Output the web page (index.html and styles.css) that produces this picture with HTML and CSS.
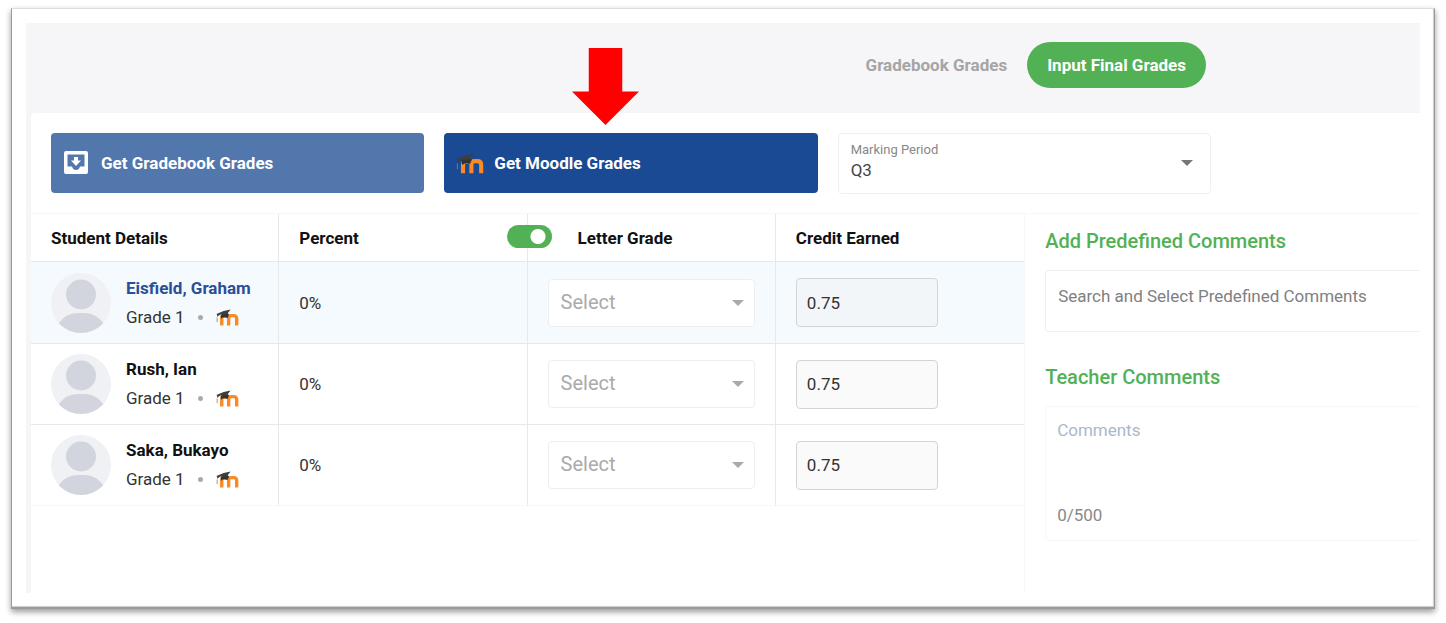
FILE: index.html
```html
<!DOCTYPE html>
<html lang="en">
<head>
  <meta charset="UTF-8" />
  <meta name="viewport" content="width=device-width, initial-scale=1.0"/>
  <title>Input Final Grades</title>
  <link rel="stylesheet" href="styles.css">
</head>
<body>
  <!-- shared icons -->
  <svg class="sprite" aria-hidden="true">
    <symbol id="moodle" viewBox="0 0 30 22">
      <path d="M7.500 21.500V12Q7.500 9 11 9H13Q16.500 9 16.500 12V21.500M16.500 12Q16.500 8.500 20 8.500H23Q27 8.500 27 12.500V21.500" fill="none" stroke="#f98a25" stroke-width="4.400"/>
      <path d="M1.500 11V17" stroke="#c8663a" stroke-width="1" fill="none"/>
      <path d="M6 7L15 5L17 7L15 11.500Q10 9.500 6.500 12.500Z" fill="#333"/>
      <path d="M0.500 6.500L10 2.500L19 0.500L14 7L6 6.800L1.500 10V7.500Z" fill="#3e3e3e"/>
    </symbol>
    <symbol id="avatar" viewBox="0 0 60 60">
      <clipPath id="round"><circle cx="30" cy="30" r="30"/></clipPath>
      <g clip-path="url(#round)">
        <rect width="60" height="60" fill="#f0f1f5"/>
        <circle cx="30" cy="21.500" r="15" fill="#d2d5dd"/>
        <path d="M7 51Q15 40 26 40H34Q45 40 53 51V60H7Z" fill="#d2d5dd"/>
      </g>
    </symbol>
  </svg>

  <div class="frame">
    <div class="app">
      <nav class="tabs">
        <a class="tab" href="#">Gradebook Grades</a>
        <a class="tab active" href="#">Input Final Grades</a>
      </nav>

      <main class="panel">
        <div class="actions">
          <button class="action">
            <svg class="inbox" viewBox="0 0 24 24"><path fill="#fff" fill-rule="evenodd" d="M2 0H22Q24 0 24 2V21Q24 23 22 23H2Q0 23 0 21V2Q0 0 2 0ZM3.500 3.500V15.500H8Q9 19 12 19T16 15.500H20.500V3.500ZM10 6H14V9.500H17L12 15L7 9.500H10Z"/></svg>
            Get Gradebook Grades
          </button>
          <button class="action moodle">
            <svg class="logo"><use href="#moodle"/></svg>
            Get Moodle Grades
            <svg class="arrow" viewBox="0 0 68 78"><path d="M17 0H51V44H68L34 78L0 44H17Z" fill="#f00"/></svg>
          </button>
          <div class="period dropdown">
            <label for="period">Marking Period</label>
            <select id="period">
              <option>Q3</option>
            </select>
          </div>
        </div>

        <div class="content">
          <div class="grades">
            <table>
              <thead>
                <tr>
                  <th>Student Details</th>
                  <th class="percent">Percent <input type="checkbox" class="toggle" aria-label="Use letter grade" checked></th>
                  <th class="letter">Letter Grade</th>
                  <th>Credit Earned</th>
                </tr>
              </thead>
              <tbody>
                <tr class="selected">
                  <td>
                    <div class="student">
                      <svg class="avatar"><use href="#avatar"/></svg>
                      <div>
                        <div class="name">Eisfield, Graham</div>
                        <div class="meta">Grade 1 <span class="dot"></span> <svg class="logo"><use href="#moodle"/></svg></div>
                      </div>
                    </div>
                  </td>
                  <td>0%</td>
                  <td><div class="dropdown"><select aria-label="Letter grade"><option>Select</option></select></div></td>
                  <td><input type="text" class="credit" aria-label="Credit earned" value="0.75"></td>
                </tr>
                <tr>
                  <td>
                    <div class="student">
                      <svg class="avatar"><use href="#avatar"/></svg>
                      <div>
                        <div class="name">Rush, Ian</div>
                        <div class="meta">Grade 1 <span class="dot"></span> <svg class="logo"><use href="#moodle"/></svg></div>
                      </div>
                    </div>
                  </td>
                  <td>0%</td>
                  <td><div class="dropdown"><select aria-label="Letter grade"><option>Select</option></select></div></td>
                  <td><input type="text" class="credit" aria-label="Credit earned" value="0.75"></td>
                </tr>
                <tr>
                  <td>
                    <div class="student">
                      <svg class="avatar"><use href="#avatar"/></svg>
                      <div>
                        <div class="name">Saka, Bukayo</div>
                        <div class="meta">Grade 1 <span class="dot"></span> <svg class="logo"><use href="#moodle"/></svg></div>
                      </div>
                    </div>
                  </td>
                  <td>0%</td>
                  <td><div class="dropdown"><select aria-label="Letter grade"><option>Select</option></select></div></td>
                  <td><input type="text" class="credit" aria-label="Credit earned" value="0.75"></td>
                </tr>
              </tbody>
            </table>
          </div>

          <aside class="comments">
            <label class="title" for="search">Add Predefined Comments</label>
            <input type="text" id="search" class="search" placeholder="Search and Select Predefined Comments">
            <label class="title" for="comment">Teacher Comments</label>
            <div class="comment-box">
              <textarea id="comment" maxlength="500" placeholder="Comments"></textarea>
              <div class="count">0/500</div>
            </div>
          </aside>
        </div>
      </main>
    </div>
  </div>
</body>
</html>
```
FILE: styles.css
```css
* {
  box-sizing: border-box;
}

body {
  margin: 0;
  min-height: 100vh;
  padding: 8px 11px 14px;
  display: flex;
  background: #fff;
  color: #333;
  font-family: Roboto, sans-serif;
  font-size: 17px;
}

button, input, select, textarea {
  font: inherit;
  color: inherit;
}

.sprite {
  position: absolute;
  width: 0;
  height: 0;
}

.frame {
  flex: 1;
  display: flex;
  min-width: 0;
  padding: 14px;
  background: #fff;
  border: 1px solid #999;
  border-top-color: #ddd;
  border-bottom: 2px solid #999;
  box-shadow: 0 3px 6px rgba(0, 0, 0, 0.4), inset -1px -1px 1px #ccc;
}

.app {
  flex: 1;
  display: flex;
  flex-direction: column;
  min-width: 0;
  background: #f6f6f9;
}

.tabs {
  display: flex;
  justify-content: flex-end;
  align-items: center;
  height: 90px;
  padding: 0 214px 7px 0;
}

.tab {
  padding: 0 20px;
  line-height: 46px;
  border-radius: 23px;
  color: #a5a5a5;
  font-weight: 700;
  text-decoration: none;
}

.tab.active {
  background: #52b155;
  color: #fff;
}

.panel {
  flex: 1;
  display: flex;
  flex-direction: column;
  margin-left: 5px;
  background: #fff;
  border-radius: 4px 0 0 0;
}

.actions {
  display: grid;
  grid-template-columns: repeat(3, 1fr);
  gap: 20px;
  padding: 20px 209px 19px 20px;
}

.action {
  position: relative;
  display: flex;
  align-items: center;
  height: 60px;
  padding: 0 13px;
  gap: 13px;
  border: none;
  border-radius: 4px;
  background: #5277ad;
  color: #fff;
  font-weight: 700;
  cursor: pointer;
}

.action.moodle {
  padding: 0 12px;
  gap: 10px;
  background: #1a4a94;
}

.inbox {
  width: 24px;
  height: 24px;
}

.action .logo {
  width: 28px;
  height: 21px;
}

/* pointer that hangs over the button */
.arrow {
  position: absolute;
  left: 128px;
  bottom: 68px;
  width: 67px;
  height: 77px;
}

.dropdown {
  position: relative;
}

.dropdown::after {
  content: "";
  position: absolute;
  right: 11px;
  top: 21px;
  border: 6px solid transparent;
  border-top-color: #aaa;
  border-bottom: none;
  pointer-events: none;
}

.dropdown select {
  display: block;
  width: 100%;
  height: 48px;
  padding: 0 12px 2px;
  appearance: none;
  border: 1px solid #eee;
  border-radius: 4px;
  background: #fff;
  color: #aaa;
  font-size: 20px;
}

.period label {
  position: absolute;
  left: 13px;
  top: 8px;
  color: #888;
  font-size: 13px;
  line-height: 18px;
}

.period.dropdown select {
  height: 61px;
  padding: 12px 12px 0;
  border-color: #f0f0f2;
  color: #444;
  font-size: 17px;
}

.period.dropdown::after {
  right: 18px;
  top: 27px;
  border-top-color: #777;
}

.content {
  flex: 1;
  display: flex;
  border-top: 1px solid #f7f7f7;
}

.grades {
  flex: none;
  width: 71.5%;
}

table {
  width: 100%;
  table-layout: fixed;
  border-collapse: separate;
  border-spacing: 0;
}

th, td {
  padding: 0 20px;
  border-right: 1px solid #e6e8ea;
  border-bottom: 1px solid #e6e8ea;
  text-align: left;
}

th:last-child, td:last-child {
  border-right: none;
}

tbody tr:last-child td {
  border-bottom-color: #f7f7f7;
}

th {
  height: 48px;
  color: #111;
  font-weight: 700;
}

th.percent {
  position: relative;
}

th.letter {
  padding-left: 50px;
}

td {
  height: 81px;
}

.selected td {
  height: 82px;
  background: #f5fafe;
}

/* sits on the line between the two grade columns */
.toggle {
  position: absolute;
  right: -25px;
  top: 11px;
  width: 45px;
  height: 23px;
  margin: 0;
  appearance: none;
  border-radius: 12px;
  background: radial-gradient(circle at 31px 50%, #fff 7px, #52b155 8px);
}

.student {
  display: flex;
  align-items: center;
  gap: 15px;
}

.avatar {
  flex: none;
  width: 60px;
  height: 60px;
}

.name {
  color: #111;
  font-weight: 700;
  line-height: 29px;
  white-space: nowrap;
}

.selected .name {
  color: #2a4f97;
}

.meta {
  display: flex;
  align-items: center;
  line-height: 29px;
}

.dot {
  width: 5px;
  height: 5px;
  margin: 0 13px;
  border-radius: 50%;
  background: #aaa;
}

.meta .logo {
  width: 23px;
  height: 17px;
}

.credit {
  display: block;
  width: 142px;
  height: 49px;
  padding: 0 10px;
  border: 1px solid #d2d5d8;
  border-radius: 4px;
  background: #fafafa;
}

.selected .credit {
  background: #f3f6f9;
}

.comments {
  flex: 1;
  display: flex;
  flex-direction: column;
  min-width: 0;
  padding: 13px 0 0 20px;
  border-left: 1px solid #f7f7f7;
}

.title {
  margin-bottom: 15px;
  color: #52b155;
  font-size: 20px;
  font-weight: 500;
  line-height: 28px;
}

.search {
  height: 62px;
  margin-bottom: 31px;
  padding: 0 12px 10px;
  border: 1px solid #f0f0f2;
  border-right: none;
  border-radius: 4px 0 0 4px;
}

.search::placeholder {
  color: #808080;
}

.comment-box {
  padding: 10px 11px;
  border: 1px solid #f7f7f7;
  border-right: none;
  border-radius: 4px 0 0 4px;
}

.comment-box textarea {
  display: block;
  width: 100%;
  height: 84px;
  padding: 0;
  border: none;
  resize: none;
  line-height: 26px;
}

.comment-box textarea::placeholder {
  color: #a9b8cc;
}

.count {
  color: #888;
  line-height: 29px;
}
```
